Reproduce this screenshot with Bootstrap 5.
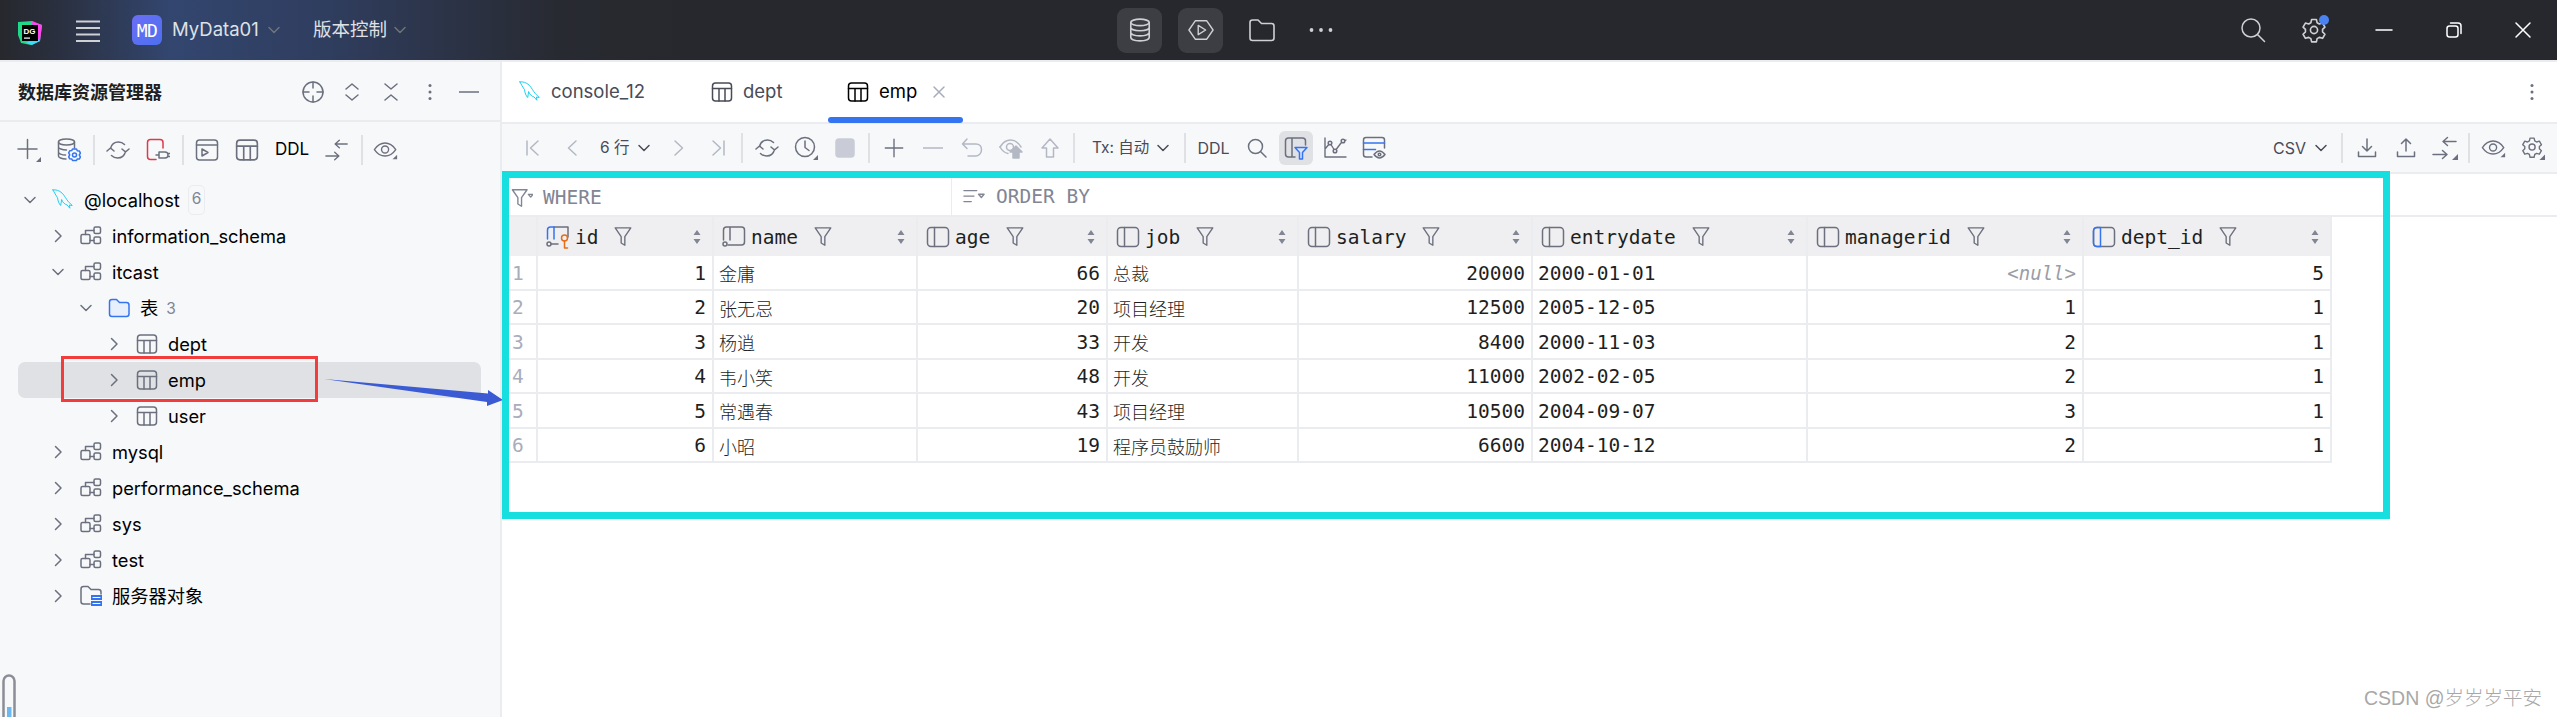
<!DOCTYPE html>
<html lang="zh-CN">
<head>
<meta charset="utf-8">
<title>DataGrip</title>
<link href="https://cdn.jsdelivr.net/npm/bootstrap@5.3.0/dist/css/bootstrap.min.css" rel="stylesheet">
<style>
html,body{height:717px;overflow:hidden;background:#fff}
body{font-family:Inter,"Noto Sans CJK SC",sans-serif;color:#000;font-size:18.3px;position:relative}
svg.ic{display:block;fill:none;stroke:currentColor;stroke-width:1.5;stroke-linecap:round;stroke-linejoin:round;flex:none}
.s14{width:14px;height:14px}.s18{width:18px;height:18px}.s20{width:20px;height:20px}.s22{width:22px;height:22px}.s24{width:24px;height:24px}.s26{width:26px;height:26px}
.titlebar{height:60px;flex-wrap:nowrap;background:linear-gradient(90deg,#27282d 0,#2a3040 60px,#33466f 170px,#2f3d5e 330px,#282a31 560px,#27282d 700px);color:#dfe1e5;font-size:18.5px;border-bottom:0}
.t-left{width:1100px}
.t-logo{width:24px;height:24px;margin-left:18px;position:relative}
.t-ham{margin-left:34px;margin-right:32px;color:#ced0d6}
.md-tile{width:30px;height:30px;border-radius:6px;background:linear-gradient(135deg,#6b6ef5,#4c70f0);color:#fff;font-family:"DejaVu Sans Mono",monospace;font-size:18px;letter-spacing:-.5px;margin-right:10px}
.t-chev{color:#6f737a}
.t-proj{width:125px}
.t-vcs{width:80px}
.t-center{width:280px;gap:16px;margin-left:17px}
.t-tile{width:45px;height:45px;border-radius:9px;background:#3c3e44;color:#ced0d6}
.t-plain{width:45px;height:45px;color:#ced0d6}
.t-dots{margin-left:-2px}
.t-right{margin-left:auto}
.t-slot{width:70px;height:60px;color:#ced0d6;position:relative}
.t-search{width:52px}
.t-end{width:68px}
.t-white{color:#fff}
.notif{position:absolute;width:10px;height:10px;border-radius:50%;background:#4a83f0;left:40px;top:15px}
.hgap{height:2px;background:#ebecf0}
.work{height:655px}
.lpanel{width:500px;height:655px;background:#f7f8fa;position:relative;flex:none}
.lhead{height:60px;border-bottom:2px solid #ebecf0;padding-left:18px;padding-right:12px;padding-top:2px}
.lhead-title{font-weight:600;font-size:18px;color:#1e1f22;width:275px}
.slot{width:39px;height:36px;color:#6c707e;flex:none}
.slot.faded{color:#b4b8c4}
.ltools{height:56px;padding-left:9px}
.ltools .slot{width:40px}
.ltools .sepx{width:9px}
.sepx{width:10px;height:30px;flex:none;display:flex;justify-content:center}
.sepx::before{content:"";width:2px;background:#dfe1e5}
.ddl-l{width:50px;color:#000;font-size:17px;text-align:center;flex:none}
.tree{margin:4px 0 0 18px;width:463px;padding:0;list-style:none}
.tree-row{height:36px;border-radius:7px;white-space:nowrap}
.tree-row>span{padding-top:2px}
.tree-row.selrow{background:#dfe1e5}
.d1{padding-left:28px}.d2{padding-left:56px}.d3{padding-left:84px}
.chev{width:24px;color:#6c707e;flex:none;margin-right:10px}
.node{width:22px;margin-right:10px;color:#6c707e;flex:none}
.cnt{font-size:15.5px;color:#818594}
.tree-row>.badge-box{border:1.5px solid #ebecf0;border-radius:5px;padding:0 3px;height:30px;line-height:26px;margin-left:8px;color:#818594;font-size:15.5px}
.thermo{position:absolute;left:1px;bottom:0;width:16px;height:43px}
.rpanel{flex:1;min-width:0;border-left:2px solid #ebecf0;height:655px;background:#fff}
.tabsbar{height:60px;position:relative;color:#494b57;font-size:18.5px}
.tabitem{height:60px;padding-left:17px;white-space:nowrap;flex:none}
.tabitem svg{margin-right:10px}
.tab1{width:192px}.tab2{width:134px}.tab3{width:135px;padding-left:19px;color:#000;position:relative}
.tab3::after{content:"";position:absolute;left:0;right:0;bottom:-1px;height:6px;border-radius:3px;background:#3574f0}
.tabitem .tabx{color:#a8adbd;margin-left:15px;margin-right:0}
.tabs-more{margin-left:auto;margin-right:0;color:#6c707e;width:50px}
.mtools{height:52px;background:#f7f8fa;border-top:2px solid #ebecf0;border-bottom:2px solid #ebecf0;padding-left:11px;padding-right:5px;color:#494b57;font-size:15.5px;white-space:nowrap}
.rows-sel{width:68px;padding-left:9px;gap:8px;flex:none}
.tx-sel{width:101px;padding-left:13px;gap:7px;flex:none}
.ddl-m{width:47px;text-align:center;flex:none;font-size:16px}
.csv-sel{width:66px;margin-left:auto;gap:8px;flex:none;font-size:16px;padding-left:2px}
.hl{width:34px;height:34px;border-radius:6px;background:#dfe1e5}
.whererow{height:43px;border-bottom:2px solid #ebecf0;color:#818594;font-family:"DejaVu Sans Mono",monospace;font-size:19.5px;padding-top:4px}
.wh{width:450px;padding-left:9px;height:39px;border-right:1px solid #ebecf0;gap:10px;flex:none}
.ob{padding-left:11px;gap:11px}
.table.dtable{table-layout:fixed;width:1830px;margin:0;border-collapse:separate;border-spacing:0;font-family:"DejaVu Sans Mono","Noto Sans CJK SC",monospace;font-size:19.5px;--bs-table-bg:#fff}
.table.dtable th,.table.dtable td{padding:2px 6px 0 5px;font-weight:400;border-bottom:2px solid #ebecf0;border-right:2px solid #ebecf0;vertical-align:middle;white-space:nowrap;box-shadow:none;color:#1e1f22;line-height:1}
.table.dtable th{height:39px;background:#efeff1;border-bottom:0;padding:0 6px 0 8px}
.table.dtable td{height:34.5px}
.table.dtable td.rn{color:#a8adbd;padding-left:10px}
.table.dtable td.cjk{font-family:"Noto Sans CJK SC",sans-serif;font-weight:300;font-size:18px}
.table.dtable td.nul{color:#9a9da6;font-style:italic;font-size:19px}
.cn{width:36px}.c1{width:176px}.c2{width:204px}.c3{width:190px}.c4{width:191px}.c5{width:234px}.c6{width:275px}.c7{width:276px}.c8{width:248px}
.colhead{gap:5px}
.colhead>span{padding-top:3px}
.colhead .fn{margin-left:10px;width:20px;height:22px;color:#6c707e}
.colhead .srt{margin-left:auto;margin-right:4px;color:#818594}
.colic{color:#6c707e}
.annot-frame{position:absolute;left:502px;top:171px;width:1888px;height:348px;border:7px solid #17dfdf;pointer-events:none}
.annot-red{position:absolute;left:61px;top:356px;width:257px;height:46px;border:3px solid #f33c3c;pointer-events:none}
.annot-arrow{position:absolute;left:320px;top:370px;width:190px;height:45px;pointer-events:none}
.wmark{position:absolute;right:15px;bottom:5px;font-family:"Liberation Sans","Noto Sans CJK SC",sans-serif;font-size:19.5px;color:#a8a8a8;font-weight:300;line-height:1.4}
</style>
</head>
<body>
<svg width="0" height="0" class="position-absolute">
<defs>
<symbol id="chd" viewBox="0 0 14 14"><path d="M2 4.500l5 5 5-5"/></symbol>
<symbol id="chr" viewBox="0 0 14 14"><path d="M4.500 1.500l5.500 5.500-5.500 5.500"/></symbol>
<symbol id="table" viewBox="0 0 22 22"><rect x="1.500" y="2" width="19" height="18" rx="3"/><path d="M1.500 7.500h19M8 7.500V20M14 7.500V20"/></symbol>
<symbol id="schema" viewBox="0 0 22 22"><rect x="1" y="9.500" width="9" height="9" rx="1.500"/><rect x="14" y="2" width="6.500" height="6.500" rx="1.500"/><rect x="14" y="12" width="6.500" height="6.500" rx="1.500"/><path d="M5.500 9.500V5.500H14M10 15.500h4"/></symbol>
<symbol id="dolphin" viewBox="0 0 24 24"><path d="M1 1c3-.5 7 .5 10 3.500 3 3 4 6 7 9.500 1 1.500 3 2 4 4l-3-.5.5 3.500-3-3.500c-3-1-5-3-6-6l-1 6.500c-2-2-3-5-3.500-8.500L3.500 5.500 1 1z" stroke-width="1"/></symbol>
<symbol id="db" viewBox="0 0 24 24"><ellipse cx="12" cy="5" rx="8.500" ry="3"/><path d="M3.500 5v14c0 1.700 3.800 3 8.500 3s8.500-1.300 8.500-3V5M3.500 9.700c0 1.700 3.800 3 8.500 3s8.500-1.300 8.500-3M3.500 14.400c0 1.700 3.800 3 8.500 3s8.500-1.300 8.500-3"/></symbol>
<symbol id="plus" viewBox="0 0 24 24"><path d="M2.500 12h19M12 2.500v19"/></symbol>
<symbol id="refresh" viewBox="0 0 24 24"><path d="M4.500 10.500C5.500 6.500 8.500 4 12.500 4c2.500 0 4.500 1 6 2.500M19.500 13.500c-1 4-4 6.500-8 6.500-2.500 0-4.500-1-6-2.500M1 13l3.500-3 3.500 3M23 11l-3.500 3-3.500-3"/></symbol>
<symbol id="gear" viewBox="0 0 24 24"><path d="M9.800 2.300h4.400l.7 3 2 1.200 3-.9 2.200 3.800-2.200 2.100v2.300l2.200 2.100-2.200 3.800-3-.9-2 1.200-.7 3H9.800l-.7-3-2-1.200-3 .9-2.200-3.800 2.200-2.100v-2.300L1.900 9.400l2.200-3.800 3 .9 2-1.200z"/><circle cx="12" cy="12" r="3.300"/></symbol>
<symbol id="funnel" viewBox="0 0 20 24"><path d="M1.500 2h17l-6.500 9.500V21l-4-2.500v-7z"/></symbol>
<symbol id="colb" viewBox="0 0 24 22"><rect x="1.500" y="1.500" width="21" height="19" rx="3.500"/><path d="M8.500 1.500v19"/></symbol>
<symbol id="srt" viewBox="0 0 10 18"><path d="M5 2l3.500 5h-7zM5 16l-3.500-5h7z" fill="currentColor" stroke="none"/></symbol>
<symbol id="eye" viewBox="0 0 28 24"><path d="M1.500 11.500C5 6.500 9 4.500 13 4.500s8 2 11.500 7c-3.500 5-7.500 7-11.500 7s-8-2-11.500-7z"/><circle cx="13" cy="11.500" r="3.800"/><path d="M26 17v5h-5z" fill="currentColor" stroke="none"/></symbol>
<symbol id="compare" viewBox="0 0 26 24"><path d="M11 5.500h13M11 5.500l4.500-4M11 5.500l4.500 4M1 18.500h14M15 18.500l-4.500-4M15 18.500l-4.500 4"/></symbol>
</defs>
</svg>

<nav class="navbar p-0 titlebar">
  <div class="d-flex align-items-center t-left">
    <div class="t-logo">
      <svg viewBox="0 0 24 24" width="24" height="24"><polygon points="0,1 14,0 18,2 24,4 22,20 13,24 3,22 0,14" fill="#21d789"/><polygon points="14,0 24,4 22,20 16,22" fill="#ff45ed"/><polygon points="14,24 22,20 18,16 8,22" fill="#3ddcff"/><rect x="4" y="4" width="16" height="16" fill="#000"/><rect x="6" y="16.500" width="6" height="1.200" fill="#fff"/><text x="5.500" y="12.500" font-size="8" font-weight="700" fill="#fff" font-family="Liberation Sans,sans-serif">DG</text></svg>
    </div>
    <svg class="ic s24 t-ham" viewBox="0 0 24 24"><path d="M0 3.500h24M0 10h24M0 16.500h24M0 23h24" stroke-width="2"/></svg>
    <div class="md-tile d-flex align-items-center justify-content-center">MD</div>
    <div class="t-proj d-flex align-items-center gap-2"><span>MyData01</span><svg class="ic s14 t-chev"><use href="#chd"/></svg></div>
    <div class="t-vcs d-flex align-items-center ms-3"><span class="text-nowrap">版本控制</span></div>
    <svg class="ic s14 t-chev"><use href="#chd"/></svg>
  </div>
  <div class="d-flex align-items-center t-center">
    <div class="t-tile d-flex align-items-center justify-content-center"><svg class="ic s26"><use href="#db"/></svg></div>
    <div class="t-tile d-flex align-items-center justify-content-center"><svg class="ic s26" viewBox="0 0 28 24"><path d="M8 2h12l7 10-7 10H8L1 12z" stroke-width="1.500"/><path d="M11 7l8 5-8 5z" stroke-width="1.500"/></svg></div>
    <div class="t-plain d-flex align-items-center justify-content-center"><svg class="ic s26" viewBox="0 0 26 24"><path d="M1 4.500C1 3 2 2 3.500 2H9l3.500 3.500h10c1.500 0 2.500 1 2.500 2.500v12c0 1.500-1 2.500-2.500 2.500h-19C2 22.500 1 21.500 1 20z" stroke-width="1.600"/></svg></div>
    <div class="t-plain t-dots d-flex align-items-center justify-content-center"><svg class="ic s24" viewBox="0 0 24 24"><circle cx="2.500" cy="12" r="1.900" fill="currentColor" stroke="none"/><circle cx="12" cy="12" r="1.900" fill="currentColor" stroke="none"/><circle cx="21.500" cy="12" r="1.900" fill="currentColor" stroke="none"/></svg></div>
  </div>
  <div class="d-flex align-items-center t-right">
    <div class="t-slot t-search d-flex align-items-center justify-content-center"><svg class="ic s26" viewBox="0 0 26 26"><circle cx="11" cy="11" r="9"/><path d="M17.500 17.500l7 7"/></svg></div>
    <div class="t-slot d-flex align-items-center justify-content-center"><svg class="ic s26"><use href="#gear"/></svg><span class="notif"></span></div>
    <div class="t-slot t-white d-flex align-items-center justify-content-center"><svg class="ic s18" viewBox="0 0 18 18"><path d="M1 9h16"/></svg></div>
    <div class="t-slot t-white d-flex align-items-center justify-content-center"><svg class="ic s18" viewBox="0 0 18 18"><rect x="2" y="5" width="11" height="11" rx="2.500"/><path d="M5.500 2h7.500c2 0 3 1 3 3v7.500"/></svg></div>
    <div class="t-slot t-end t-white d-flex align-items-center justify-content-center"><svg class="ic s18" viewBox="0 0 18 18"><path d="M2 2l14 14M16 2L2 16"/></svg></div>
  </div>
</nav>
<div class="hgap"></div>

<div class="d-flex work">
  <aside class="lpanel">
    <div class="lhead d-flex align-items-center">
      <div class="lhead-title text-nowrap">数据库资源管理器</div>
      <div class="slot d-flex align-items-center justify-content-center"><svg class="ic s24" viewBox="0 0 24 24"><circle cx="12" cy="12" r="10"/><path d="M12 2v6M12 16v6M2 12h6M16 12h6"/></svg></div>
      <div class="slot d-flex align-items-center justify-content-center"><svg class="ic s18" viewBox="0 0 18 18"><path d="M3 6l6-5 6 5M3 12l6 5 6-5"/></svg></div>
      <div class="slot d-flex align-items-center justify-content-center"><svg class="ic s18" viewBox="0 0 18 18"><path d="M3 1l6 5 6-5M3 17l6-5 6 5"/></svg></div>
      <div class="slot d-flex align-items-center justify-content-center"><svg class="ic s18" viewBox="0 0 18 18"><circle cx="9" cy="2.500" r="1.500" fill="currentColor" stroke="none"/><circle cx="9" cy="9" r="1.500" fill="currentColor" stroke="none"/><circle cx="9" cy="15.500" r="1.500" fill="currentColor" stroke="none"/></svg></div>
      <div class="slot d-flex align-items-center justify-content-center"><svg class="ic s20" viewBox="0 0 20 20"><path d="M0 10h20"/></svg></div>
    </div>
    <div class="ltools d-flex align-items-center">
      <div class="slot d-flex align-items-center justify-content-center"><svg class="ic s24" viewBox="0 0 24 24"><path d="M1 11h19M10.500 1.500v19"/><path d="M24 19v5h-5z" fill="currentColor" stroke="none"/></svg></div>
      <div class="slot d-flex align-items-center justify-content-center"><svg class="ic s24" viewBox="0 0 24 24"><ellipse cx="9.500" cy="4" rx="8" ry="3"/><path d="M1.500 4v14c0 1.500 3 3 7.500 3M1.500 9c0 1.500 3.500 3 8 3M1.500 14c0 1.500 3 3 7 3M17.500 4v6"/><circle cx="17.500" cy="17" r="2" stroke="#3574f0"/><path d="M15.500 11h4l.8 1.800 2 .2 1.200 2-1.200 2 1.200 2-1.200 2-2-.1-.8 1.600h-4l-.8-1.600-2-.1-1-2 1-2-1-2 1-2 2-.2z" stroke="#3574f0"/></svg></div>
      <div class="sepx"></div>
      <div class="slot d-flex align-items-center justify-content-center"><svg class="ic s24"><use href="#refresh"/></svg></div>
      <div class="slot d-flex align-items-center justify-content-center"><svg class="ic s24" viewBox="0 0 24 24"><path d="M17 10V4.500C17 2.500 16 1.500 14 1.500H4.500C2.500 1.500 1.500 2.500 1.500 4.500v14c0 2 1 3 3 3H10" stroke="#db3b4b"/><path d="M13 14h6c2 0 3 1 3 3s-1 3-3 3h-6zM22 15.500h2M22 18.500h2M13 17h-3" stroke="#6c707e"/></svg></div>
      <div class="sepx"></div>
      <div class="slot d-flex align-items-center justify-content-center"><svg class="ic s24" viewBox="0 0 24 24"><rect x="1.500" y="2" width="21" height="20" rx="3"/><path d="M1.500 7h21M7 11v7l6-3.500z"/></svg></div>
      <div class="slot d-flex align-items-center justify-content-center"><svg class="ic s24"><use href="#table"/></svg></div>
      <div class="ddl-l">DDL</div>
      <div class="slot d-flex align-items-center justify-content-center"><svg class="ic s24"><use href="#compare"/></svg></div>
      <div class="sepx"></div>
      <div class="slot d-flex align-items-center justify-content-center"><svg class="ic s26"><use href="#eye"/></svg></div>
    </div>
    <ul class="tree">
      <li class="tree-row d-flex align-items-center"><svg class="ic s14 chev"><use href="#chd"/></svg><svg class="ic s22 node text-info"><use href="#dolphin"/></svg><span>@localhost</span><span class="badge-box">6</span></li>
      <li class="tree-row d1 d-flex align-items-center"><svg class="ic s14 chev"><use href="#chr"/></svg><svg class="ic s22 node"><use href="#schema"/></svg><span>information_schema</span></li>
      <li class="tree-row d1 d-flex align-items-center"><svg class="ic s14 chev"><use href="#chd"/></svg><svg class="ic s22 node"><use href="#schema"/></svg><span>itcast</span></li>
      <li class="tree-row d2 d-flex align-items-center"><svg class="ic s14 chev"><use href="#chd"/></svg><svg class="ic s22 node" viewBox="0 0 22 22"><path d="M1.500 5c0-1.500 1-2.500 2.500-2.500h4.500l3 3h7c1.500 0 2.500 1 2.500 2.500v9c0 1.500-1 2.500-2.500 2.500H4c-1.500 0-2.500-1-2.500-2.500z" stroke="#3574f0" fill="#e7effd"/></svg><span>表</span><span class="cnt ms-2">3</span></li>
      <li class="tree-row d3 d-flex align-items-center"><svg class="ic s14 chev"><use href="#chr"/></svg><svg class="ic s22 node"><use href="#table"/></svg><span>dept</span></li>
      <li class="tree-row selrow d3 d-flex align-items-center"><svg class="ic s14 chev"><use href="#chr"/></svg><svg class="ic s22 node"><use href="#table"/></svg><span>emp</span></li>
      <li class="tree-row d3 d-flex align-items-center"><svg class="ic s14 chev"><use href="#chr"/></svg><svg class="ic s22 node"><use href="#table"/></svg><span>user</span></li>
      <li class="tree-row d1 d-flex align-items-center"><svg class="ic s14 chev"><use href="#chr"/></svg><svg class="ic s22 node"><use href="#schema"/></svg><span>mysql</span></li>
      <li class="tree-row d1 d-flex align-items-center"><svg class="ic s14 chev"><use href="#chr"/></svg><svg class="ic s22 node"><use href="#schema"/></svg><span>performance_schema</span></li>
      <li class="tree-row d1 d-flex align-items-center"><svg class="ic s14 chev"><use href="#chr"/></svg><svg class="ic s22 node"><use href="#schema"/></svg><span>sys</span></li>
      <li class="tree-row d1 d-flex align-items-center"><svg class="ic s14 chev"><use href="#chr"/></svg><svg class="ic s22 node"><use href="#schema"/></svg><span>test</span></li>
      <li class="tree-row d1 d-flex align-items-center"><svg class="ic s14 chev"><use href="#chr"/></svg><svg class="ic s22 node" viewBox="0 0 22 22"><path d="M10 19H3.500C2 19 1 18 1 16.500V4C1 2.500 2 1.500 3.500 1.500H8l3 3h7.500c1.500 0 2.500 1 2.500 2.500v2"/><rect x="11" y="10" width="11" height="5" fill="#3574f0" stroke="none"/><rect x="11" y="16" width="11" height="5" fill="#3574f0" stroke="none"/><path d="M13 12.500h7M13 18.500h7" stroke="#fff" stroke-width="1"/></svg><span>服务器对象</span></li>
    </ul>
    <svg class="thermo" viewBox="0 0 16 43"><path d="M2.500 43V7a5.500 5.500 0 0 1 11 0v36" fill="none" stroke="#8b8e96" stroke-width="2.500"/><rect x="6" y="33" width="4.500" height="10" fill="#6cb8f0"/></svg>
  </aside>

  <main class="rpanel">
    <div class="tabsbar d-flex align-items-center">
      <div class="tabitem tab1 d-flex align-items-center"><svg class="ic s22 text-info" viewBox="0 0 24 24"><use href="#dolphin"/></svg><span>console_12</span></div>
      <div class="tabitem tab2 d-flex align-items-center"><svg class="ic s22"><use href="#table"/></svg><span>dept</span></div>
      <div class="tabitem tab3 d-flex align-items-center"><svg class="ic s22"><use href="#table"/></svg><span>emp</span><svg class="ic s14 tabx" viewBox="0 0 14 14"><path d="M2 2l10 10M12 2L2 12"/></svg></div>
      <div class="tabs-more d-flex justify-content-center"><svg class="ic s18" viewBox="0 0 18 18"><circle cx="9" cy="2.500" r="1.500" fill="currentColor" stroke="none"/><circle cx="9" cy="9" r="1.500" fill="currentColor" stroke="none"/><circle cx="9" cy="15.500" r="1.500" fill="currentColor" stroke="none"/></svg></div>
    </div>
    <div class="mtools d-flex align-items-center">
      <div class="slot faded d-flex align-items-center justify-content-center"><svg class="ic s18" viewBox="0 0 18 18"><path d="M3 2v14M14 2L6.500 9 14 16"/></svg></div>
      <div class="slot faded d-flex align-items-center justify-content-center"><svg class="ic s18" viewBox="0 0 18 18"><path d="M13 2L5.500 9 13 16"/></svg></div>
      <div class="rows-sel d-flex align-items-center"><span class="text-nowrap">6 行</span><svg class="ic s14"><use href="#chd"/></svg></div>
      <div class="slot faded d-flex align-items-center justify-content-center"><svg class="ic s18" viewBox="0 0 18 18"><path d="M5 2l7.500 7L5 16"/></svg></div>
      <div class="slot faded d-flex align-items-center justify-content-center"><svg class="ic s18" viewBox="0 0 18 18"><path d="M15 2v14M4 2l7.500 7L4 16"/></svg></div>
      <div class="sepx"></div>
      <div class="slot d-flex align-items-center justify-content-center"><svg class="ic s24"><use href="#refresh"/></svg></div>
      <div class="slot d-flex align-items-center justify-content-center"><svg class="ic s24" viewBox="0 0 24 24"><circle cx="11" cy="11" r="9.500"/><path d="M11 5v6.500l4 3"/><path d="M24 19v5h-5z" fill="currentColor" stroke="none"/></svg></div>
      <div class="slot d-flex align-items-center justify-content-center"><svg class="ic s20" viewBox="0 0 20 20"><rect x="1" y="1" width="18" height="18" rx="3" fill="#c9ccd6" stroke="#c9ccd6"/></svg></div>
      <div class="sepx"></div>
      <div class="slot d-flex align-items-center justify-content-center"><svg class="ic s22" viewBox="0 0 24 24"><use href="#plus"/></svg></div>
      <div class="slot faded d-flex align-items-center justify-content-center"><svg class="ic s20" viewBox="0 0 20 20"><path d="M0 10h20"/></svg></div>
      <div class="slot faded d-flex align-items-center justify-content-center"><svg class="ic s22" viewBox="0 0 22 22"><path d="M6 2L1.500 7 6 11.500M1.500 7H15c3.500 0 5.500 2.500 5.500 5.500S18.500 19 15 19H7"/></svg></div>
      <div class="slot faded d-flex align-items-center justify-content-center"><svg class="ic s24" viewBox="0 0 24 24"><path d="M1 11C4 6 8 4 11.500 4S19 6 22 11"/><path d="M1 11c2 3.500 5 6 8 6.500"/><circle cx="11" cy="11" r="3.500"/><path d="M17 10l6 6h-3v6h-6v-6h-3z" fill="#b4b8c4"/></svg></div>
      <div class="slot faded d-flex align-items-center justify-content-center"><svg class="ic s22" viewBox="0 0 22 22"><path d="M11 2l8 9h-4.500v9h-7v-9H3z"/></svg></div>
      <div class="sepx"></div>
      <div class="tx-sel d-flex align-items-center"><span class="text-nowrap">Tx: 自动</span><svg class="ic s14"><use href="#chd"/></svg></div>
      <div class="sepx"></div>
      <div class="ddl-m">DDL</div>
      <div class="slot d-flex align-items-center justify-content-center"><svg class="ic s20" viewBox="0 0 20 20"><circle cx="8.500" cy="8.500" r="7"/><path d="M13.500 13.500l5.500 5.500"/></svg></div>
      <div class="slot d-flex align-items-center justify-content-center"><div class="hl d-flex align-items-center justify-content-center"><svg class="ic s24" viewBox="0 0 24 24"><path d="M11 21H4.500C2.500 21 1.500 20 1.500 18V5C1.500 3 2.500 2 4.500 2h14c2 0 3 1 3 3v4M8 2v19"/><path d="M11 11.500h12l-4.500 5V23h-3v-6.500z" stroke="#3574f0" fill="#dbe6fb"/></svg></div></div>
      <div class="slot d-flex align-items-center justify-content-center"><svg class="ic s24" viewBox="0 0 24 24"><path d="M2 2v19h21M2 13l5-6 5 8 6-8 5-3" stroke-width="1.400"/><circle cx="7" cy="7" r="1.800" fill="#f7f8fa"/><circle cx="12" cy="15" r="1.800" fill="#f7f8fa"/><circle cx="20" cy="5" r="1.800" fill="#f7f8fa"/></svg></div>
      <div class="slot d-flex align-items-center justify-content-center"><svg class="ic s24" viewBox="0 0 24 24"><path d="M10 21H4C2.500 21 1.500 20 1.500 18.500V4C1.500 2.500 2.500 1.500 4 1.500h16c1.500 0 2.500 1 2.500 2.500v8"/><path d="M1.500 7h21M1.500 13.500h12" stroke="#3574f0"/><path d="M12 18.500c2-2.500 4-3.500 5.500-3.500s3.500 1 5.500 3.500c-2 2.500-4 3.500-5.500 3.500s-3.500-1-5.500-3.500z" fill="#f7f8fa"/><circle cx="17.500" cy="18.500" r="1.300"/></svg></div>
      <div class="csv-sel d-flex align-items-center"><span>CSV</span><svg class="ic s14"><use href="#chd"/></svg></div>
      <div class="sepx"></div>
      <div class="slot d-flex align-items-center justify-content-center"><svg class="ic s20" viewBox="0 0 20 20"><path d="M10 1v12M5.500 8.500L10 13l4.500-4.500M1.500 14v4.500h17V14"/></svg></div>
      <div class="slot d-flex align-items-center justify-content-center"><svg class="ic s20" viewBox="0 0 20 20"><path d="M10 13V1M5.500 5.500L10 1l4.500 4.500M1.500 14v4.500h17V14"/></svg></div>
      <div class="slot d-flex align-items-center justify-content-center"><svg class="ic s26" viewBox="0 0 26 24"><use href="#compare"/><path d="M26 18v6h-6z" fill="currentColor" stroke="none"/></svg></div>
      <div class="sepx"></div>
      <div class="slot d-flex align-items-center justify-content-center"><svg class="ic s26"><use href="#eye"/></svg></div>
      <div class="slot d-flex align-items-center justify-content-center"><svg class="ic s24" viewBox="0 0 26 26"><use href="#gear" width="24" height="24"/><path d="M26 20v6h-6z" fill="currentColor" stroke="none"/></svg></div>
    </div>
    <div class="whererow d-flex">
      <div class="wh d-flex align-items-center"><svg class="ic s22" viewBox="0 0 24 24"><path d="M1.500 3h16l-6 8.500V21l-4-2.500v-7zM19 8h5l-2.500 3z" stroke-width="1.500"/></svg><span>WHERE</span></div>
      <div class="ob d-flex align-items-center"><svg class="ic s22" viewBox="0 0 24 24"><path d="M1 5h14M1 11h11M1 17h8M17 9h6l-3 3.500z"/></svg><span>ORDER BY</span></div>
    </div>
    <table class="table dtable">
      <colgroup><col class="cn"><col class="c1"><col class="c2"><col class="c3"><col class="c4"><col class="c5"><col class="c6"><col class="c7"><col class="c8"></colgroup>
      <thead>
        <tr>
          <th></th>
          <th><div class="d-flex align-items-center colhead"><svg class="ic s24 colic" viewBox="0 0 24 24"><path d="M8 2H22v10" /><path d="M1.500 14V5c0-2 1-3 3-3h3.500v12" stroke="#3574f0"/><circle cx="3" cy="19" r="2"/><path d="M5 19h7"/><circle cx="18.500" cy="13" r="3" stroke="#e66d17"/><path d="M18.500 16v7h3" stroke="#e66d17"/></svg><span>id</span><svg class="ic fn"><use href="#funnel"/></svg><svg class="ic srt" width="10" height="18"><use href="#srt"/></svg></div></th>
          <th><div class="d-flex align-items-center colhead"><svg class="ic s24 colic" viewBox="0 0 24 24"><path d="M1.500 15V5c0-2 1-3 3-3h15c2 0 3 1 3 3v12c0 2-1 3-3 3H6M8 2v13"/><circle cx="3" cy="19" r="2"/></svg><span>name</span><svg class="ic fn"><use href="#funnel"/></svg><svg class="ic srt" width="10" height="18"><use href="#srt"/></svg></div></th>
          <th><div class="d-flex align-items-center colhead"><svg class="ic s24 colic"><use href="#colb"/></svg><span>age</span><svg class="ic fn"><use href="#funnel"/></svg><svg class="ic srt" width="10" height="18"><use href="#srt"/></svg></div></th>
          <th><div class="d-flex align-items-center colhead"><svg class="ic s24 colic"><use href="#colb"/></svg><span>job</span><svg class="ic fn"><use href="#funnel"/></svg><svg class="ic srt" width="10" height="18"><use href="#srt"/></svg></div></th>
          <th><div class="d-flex align-items-center colhead"><svg class="ic s24 colic"><use href="#colb"/></svg><span>salary</span><svg class="ic fn"><use href="#funnel"/></svg><svg class="ic srt" width="10" height="18"><use href="#srt"/></svg></div></th>
          <th><div class="d-flex align-items-center colhead"><svg class="ic s24 colic"><use href="#colb"/></svg><span>entrydate</span><svg class="ic fn"><use href="#funnel"/></svg><svg class="ic srt" width="10" height="18"><use href="#srt"/></svg></div></th>
          <th><div class="d-flex align-items-center colhead"><svg class="ic s24 colic"><use href="#colb"/></svg><span>managerid</span><svg class="ic fn"><use href="#funnel"/></svg><svg class="ic srt" width="10" height="18"><use href="#srt"/></svg></div></th>
          <th><div class="d-flex align-items-center colhead"><svg class="ic s24 colic" viewBox="0 0 24 22"><rect x="1.500" y="1.500" width="21" height="19" rx="3.500"/><path d="M8.500 1.500H5C3 1.500 1.500 3 1.500 5v12c0 2 1.500 3.500 3.500 3.500h3.500z" stroke="#3574f0"/></svg><span>dept_id</span><svg class="ic fn"><use href="#funnel"/></svg><svg class="ic srt" width="10" height="18"><use href="#srt"/></svg></div></th>
        </tr>
      </thead>
      <tbody>
        <tr><td class="rn">1</td><td class="text-end">1</td><td class="cjk">金庸</td><td class="text-end">66</td><td class="cjk">总裁</td><td class="text-end">20000</td><td>2000-01-01</td><td class="text-end nul">&lt;null&gt;</td><td class="text-end">5</td></tr>
        <tr><td class="rn">2</td><td class="text-end">2</td><td class="cjk">张无忌</td><td class="text-end">20</td><td class="cjk">项目经理</td><td class="text-end">12500</td><td>2005-12-05</td><td class="text-end">1</td><td class="text-end">1</td></tr>
        <tr><td class="rn">3</td><td class="text-end">3</td><td class="cjk">杨逍</td><td class="text-end">33</td><td class="cjk">开发</td><td class="text-end">8400</td><td>2000-11-03</td><td class="text-end">2</td><td class="text-end">1</td></tr>
        <tr><td class="rn">4</td><td class="text-end">4</td><td class="cjk">韦小笑</td><td class="text-end">48</td><td class="cjk">开发</td><td class="text-end">11000</td><td>2002-02-05</td><td class="text-end">2</td><td class="text-end">1</td></tr>
        <tr><td class="rn">5</td><td class="text-end">5</td><td class="cjk">常遇春</td><td class="text-end">43</td><td class="cjk">项目经理</td><td class="text-end">10500</td><td>2004-09-07</td><td class="text-end">3</td><td class="text-end">1</td></tr>
        <tr><td class="rn">6</td><td class="text-end">6</td><td class="cjk">小昭</td><td class="text-end">19</td><td class="cjk">程序员鼓励师</td><td class="text-end">6600</td><td>2004-10-12</td><td class="text-end">2</td><td class="text-end">1</td></tr>
      </tbody>
    </table>
  </main>
</div>

<div class="annot-red"></div>
<svg class="annot-arrow" viewBox="320 370 190 45"><polygon points="324,379 488,393.500 488,390 503,400 487,406 487,402" fill="#3a5bd4"/></svg>
<div class="annot-frame"></div>
<div class="wmark">CSDN @岁岁岁平安</div>
<script src="https://cdn.jsdelivr.net/npm/bootstrap@5.3.0/dist/js/bootstrap.bundle.min.js"></script>
</body>
</html>
